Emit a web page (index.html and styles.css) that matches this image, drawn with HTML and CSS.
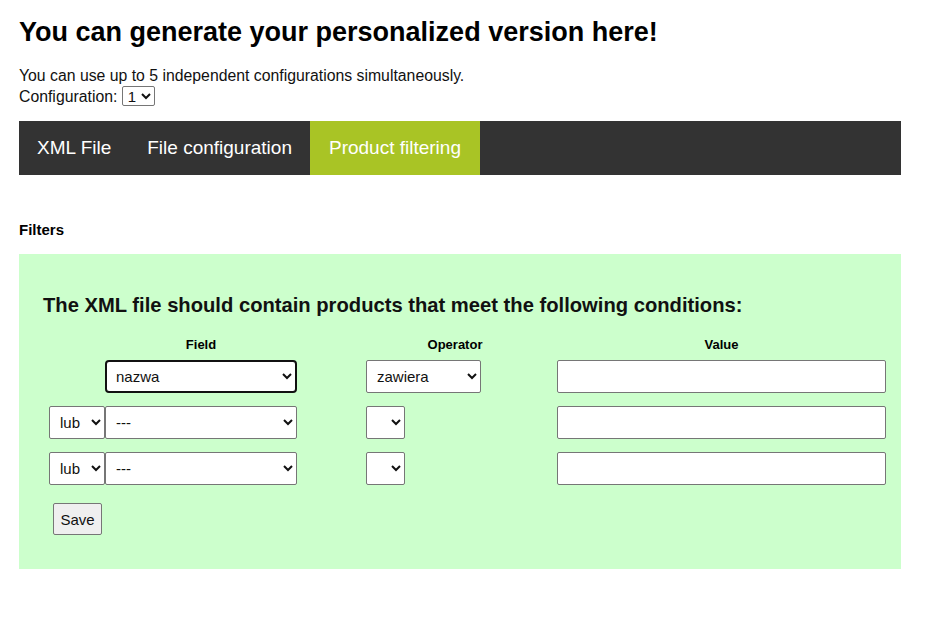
FILE: index.html
```html
<!doctype html>
<html lang="en">
<head>
	<meta charset="UTF-8">
	<title>Generator</title>

	<link rel="stylesheet" href="styles.css">
</head>
<body>
	<div class="container">
		<h1>You can generate your personalized version here!</h1>
		<p class="intro">
			You can use up to 5 independent configurations simultaneously.<br>
			Configuration: <select class="config-select"><option>1</option></select>
		</p>

		<nav class="tabs">
			<a href="#">XML File</a>
			<a href="#">File configuration</a>
			<a href="#" class="active">Product filtering</a>
		</nav>

		<h4 class="filters-title">Filters</h4>

		<div class="filters">
			<h3>The XML file should contain products that meet the following conditions:</h3>

			<div class="conditions">
				<div></div>
				<div class="head">Field</div>
				<div></div>
				<div class="head">Operator</div>
				<div></div>
				<div class="head">Value</div>

				<div></div>
				<div><select class="field focused"><option>nazwa</option></select></div>
				<div></div>
				<div><select class="operator"><option>zawiera</option></select></div>
				<div></div>
				<div><input type="text" class="value"></div>

				<div><select class="join"><option>lub</option></select></div>
				<div><select class="field"><option>---</option></select></div>
				<div></div>
				<div><select class="operator empty"><option></option></select></div>
				<div></div>
				<div><input type="text" class="value"></div>

				<div><select class="join"><option>lub</option></select></div>
				<div><select class="field"><option>---</option></select></div>
				<div></div>
				<div><select class="operator empty"><option></option></select></div>
				<div></div>
				<div><input type="text" class="value"></div>
			</div>

			<button class="save">Save</button>
		</div>
	</div>
</body>
</html>
```

FILE: styles.css
```css
html {
	box-sizing: border-box;
}

*, *:before, *:after {
	box-sizing: inherit;
}

body {
	margin: 0;
	font-family: "Liberation Sans", Arial, sans-serif;
	color: #000;
	background: #fff;
}

.container {
	width: 882px;
	margin: 0 0 0 19px;
	padding-top: 15px;
}

h1 {
	font-size: 27px;
	margin: 0 0 17px;
	line-height: 34px;
}

.intro {
	font-size: 15.8px;
	line-height: 20px;
	margin: 0 0 14px;
	color: #111;
}

.config-select {
	font-family: inherit;
	font-size: 15px;
	height: 20px;
	padding: 0 1px;
	border: 1px solid #767676;
	border-radius: 2px;
	background: #fff;
	vertical-align: baseline;
}

.tabs {
	display: flex;
	background: #333;
	height: 54px;
}

.tabs a {
	color: #fff;
	text-decoration: none;
	font-size: 19px;
	line-height: 54px;
	padding: 0 18px;
}

.tabs a.active {
	background: #a9c425;
	padding: 0 19px;
}

.filters-title {
	font-size: 15px;
	margin: 46px 0 15px;
	line-height: 18px;
}

.filters {
	background: #ccffcc;
	padding: 39px 24px 34px;
	height: 315px;
}

.filters h3 {
	font-size: 20.2px;
	margin: 0 0 20px;
	line-height: 24px;
	color: #111;
}

.conditions {
	display: grid;
	grid-template-columns: 56px 192px 69px 178px 13px 329px;
	row-gap: 13px;
	margin-left: 6px;
	align-items: center;
}

.conditions .head {
	font-size: 13px;
	font-weight: bold;
	text-align: center;
	line-height: 15px;
	margin-bottom: -5px;
}

select,
input {
	font-family: "Liberation Sans", Arial, sans-serif;
	font-size: 15px;
	color: #111;
}

.conditions select {
	height: 33px;
	border: 1px solid #767676;
	border-radius: 2px;
	background: #fff;
	padding: 0 4px 0 6px;
	display: block;
}

.join {
	width: 56px;
}

.field {
	width: 192px;
}

.field.focused {
	border: 2px solid #111;
	border-radius: 4px;
	padding-left: 5px;
}

.operator {
	width: 115px;
}

.operator.empty {
	width: 39px;
}

.value {
	width: 329px;
	height: 33px;
	border: 1px solid #767676;
	border-radius: 2px;
	background: #fff;
	display: block;
}

.save {
	margin: 18px 0 0 10px;
	font-family: "Liberation Sans", Arial, sans-serif;
	font-size: 15px;
	width: 49px;
	height: 32px;
	padding: 0;
	background: #efefef;
	border: 1px solid #767676;
	border-radius: 2px;
	color: #111;
}
```
